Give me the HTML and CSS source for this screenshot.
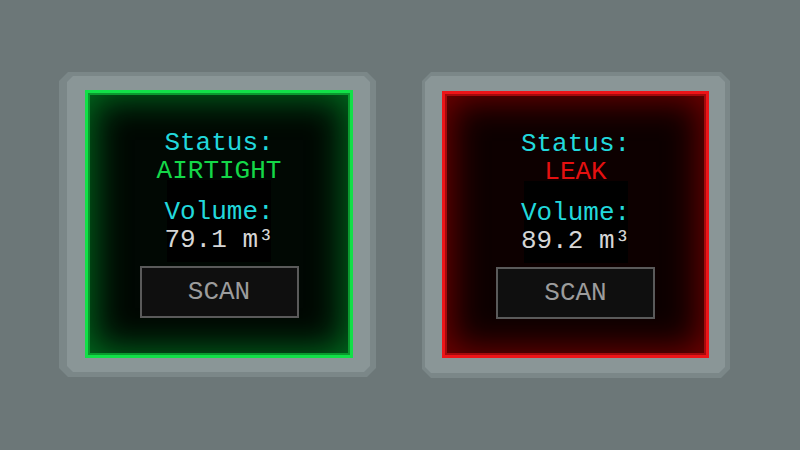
FILE: index.html
```html
<!DOCTYPE html>
<html>
<head>
<meta charset="utf-8">
<link rel="stylesheet" href="styles.css">
</head>
<body>
<div class="stage">
  <div class="frame frame-left">
    <div class="face face-left">
      <div class="screen screen-ok">
        <div class="line label">Status:</div>
        <div class="line status-ok">AIRTIGHT</div>
        <div class="readout">
          <div class="line label">Volume:</div>
          <div class="line value">79.1 m³</div>
        </div>
        <div class="scan">SCAN</div>
      </div>
    </div>
  </div>
  <div class="frame frame-right">
    <div class="face face-right">
      <div class="screen screen-leak">
        <div class="line label">Status:</div>
        <div class="line status-leak">LEAK</div>
        <div class="readout">
          <div class="line label">Volume:</div>
          <div class="line value">89.2 m³</div>
        </div>
        <div class="scan">SCAN</div>
      </div>
    </div>
  </div>
</div>
</body>
</html>
```
FILE: styles.css
```css
html, body {
  margin: 0;
  padding: 0;
  width: 800px;
  height: 450px;
  background: #6c7778;
  overflow: hidden;
}
.stage {
  display: flex;
  align-items: flex-start;
  gap: 46px;
  padding: 72px 0 0 59px;
}
.frame {
  background: #7b8788;
  clip-path: polygon(9px 0, calc(100% - 9px) 0, 100% 9px, 100% calc(100% - 9px), calc(100% - 9px) 100%, 9px 100%, 0 calc(100% - 9px), 0 9px);
}
.frame-left {
  padding: 4px 6px 5px 8px;
}
.frame-right {
  padding: 4px 5px 5px 3px;
}
.face {
  background: #8a9697;
  clip-path: polygon(6px 0, calc(100% - 6px) 0, 100% 6px, 100% calc(100% - 6px), calc(100% - 6px) 100%, 6px 100%, 0 calc(100% - 6px), 0 6px);
}
.face-left {
  padding: 14px 17px 14px 18px;
}
.face-right {
  padding: 15px 16px 15px 17px;
}
.screen {
  box-sizing: border-box;
  width: 268px;
  height: 268px;
  border: 3px solid;
  display: flex;
  flex-direction: column;
  align-items: center;
  padding-top: 36px;
  font-family: "Liberation Mono", "DejaVu Sans Mono", monospace;
  font-size: 26px;
}
.screen-ok {
  border-color: #12e048;
  background: #010803;
  box-shadow: inset 0 0 0 2px #0a9a2e, inset 0 0 34px 6px rgba(0, 140, 40, 0.75);
}
.screen-leak {
  width: 267px;
  height: 267px;
  border-color: #ec1418;
  background: #0d0000;
  box-shadow: inset 0 0 0 2px #a30a0c, inset 0 0 34px 6px rgba(150, 0, 0, 0.75);
}
.line {
  height: 28px;
  line-height: 28px;
  white-space: nowrap;
}
.label {
  color: #22d8dc;
}
.status-ok {
  color: #14d848;
}
.status-leak {
  color: #e41010;
}
.value {
  color: #d6d6d6;
}
.readout {
  width: 104px;
  margin-top: -5px;
  padding: 18px 0 8px;
  background: #000;
  display: flex;
  flex-direction: column;
  align-items: center;
}
.scan {
  box-sizing: border-box;
  margin-top: 4px;
  width: 159px;
  height: 52px;
  border: 2px solid #5a5a5a;
  background: #0f0f0f;
  color: #9c9c9c;
  display: flex;
  align-items: center;
  justify-content: center;
}
```
